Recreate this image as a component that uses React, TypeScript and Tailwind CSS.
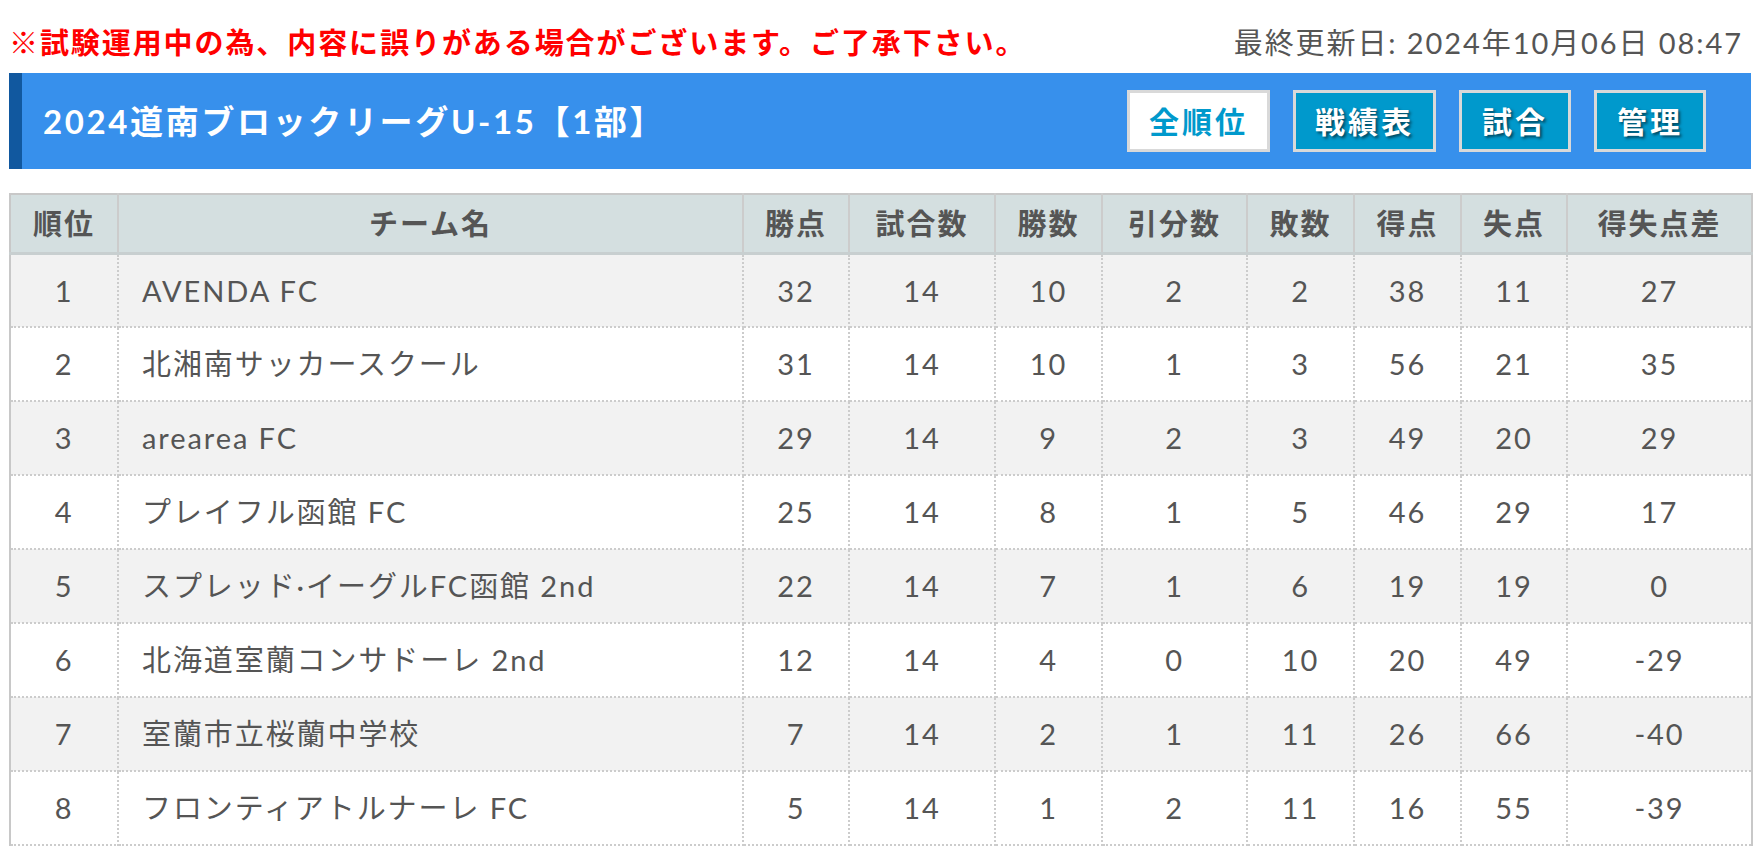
import React from "react";

interface Standing {
  rank: number;
  team: string;
  points: number;
  played: number;
  won: number;
  drawn: number;
  lost: number;
  goalsFor: number;
  goalsAgainst: number;
  diff: number;
}

const standings: Standing[] = [
  { rank: 1, team: "AVENDA FC", points: 32, played: 14, won: 10, drawn: 2, lost: 2, goalsFor: 38, goalsAgainst: 11, diff: 27 },
  { rank: 2, team: "北湘南サッカースクール", points: 31, played: 14, won: 10, drawn: 1, lost: 3, goalsFor: 56, goalsAgainst: 21, diff: 35 },
  { rank: 3, team: "arearea FC", points: 29, played: 14, won: 9, drawn: 2, lost: 3, goalsFor: 49, goalsAgainst: 20, diff: 29 },
  { rank: 4, team: "プレイフル函館 FC", points: 25, played: 14, won: 8, drawn: 1, lost: 5, goalsFor: 46, goalsAgainst: 29, diff: 17 },
  { rank: 5, team: "スプレッド·イーグルFC函館 2nd", points: 22, played: 14, won: 7, drawn: 1, lost: 6, goalsFor: 19, goalsAgainst: 19, diff: 0 },
  { rank: 6, team: "北海道室蘭コンサドーレ 2nd", points: 12, played: 14, won: 4, drawn: 0, lost: 10, goalsFor: 20, goalsAgainst: 49, diff: -29 },
  { rank: 7, team: "室蘭市立桜蘭中学校", points: 7, played: 14, won: 2, drawn: 1, lost: 11, goalsFor: 26, goalsAgainst: 66, diff: -40 },
  { rank: 8, team: "フロンティアトルナーレ FC", points: 5, played: 14, won: 1, drawn: 2, lost: 11, goalsFor: 16, goalsAgainst: 55, diff: -39 },
];

// column header + fixed width (px)
const columns = [
  { label: "順位", width: "w-[108px]" },
  { label: "チーム名", width: "w-[625px]" },
  { label: "勝点", width: "w-[106px]" },
  { label: "試合数", width: "w-[146px]" },
  { label: "勝数", width: "w-[107px]" },
  { label: "引分数", width: "w-[145px]" },
  { label: "敗数", width: "w-[107px]" },
  { label: "得点", width: "w-[107px]" },
  { label: "失点", width: "w-[106px]" },
  { label: "得失点差", width: "w-[185px]" },
];

const navButtons = [
  { label: "全順位", active: true, width: "w-[143px]" },
  { label: "戦績表", active: false, width: "w-[143px]" },
  { label: "試合", active: false, width: "w-[112px]" },
  { label: "管理", active: false, width: "w-[112px]" },
];

export default function App() {
  return (
    <div className="min-h-[867px] bg-white pl-[9px] pr-[11px] font-['Lato','Noto_Sans_CJK_JP',sans-serif] tracking-[0.12em] text-[#555]">
      {/* Notice + last updated */}
      <div className="flex h-[73px] items-center justify-between pt-[12px] pr-[8px] text-[29px] leading-[40px]">
        <p className="font-bold text-[#ff0000]">
          ※試験運用中の為、内容に誤りがある場合がございます。ご了承下さい。
        </p>
        <p className="text-[#555]">最終更新日: 2024年10月06日 08:47</p>
      </div>

      {/* Title bar */}
      <div className="flex h-[96px] items-center justify-between border-l-[13px] border-[#11589f] bg-[#3790ec] pl-[21px] pr-[45px]">
        <h1 className="text-[33px] font-bold leading-none tracking-[0.08em] text-white">
          2024道南ブロックリーグU-15【1部】
        </h1>
        <div className="flex gap-[23px]">
          {navButtons.map((b) => (
            <a
              key={b.label}
              className={`${b.width} flex h-[62px] items-center justify-center border-[3px] border-[#d9d9d9] text-[30px] font-bold tracking-[0.1em] ${
                b.active
                  ? "bg-white text-[#0099cc]"
                  : "bg-[#0099cc] text-white [text-shadow:2px_2px_3px_rgba(0,0,0,0.55)]"
              }`}
            >
              {b.label}
            </a>
          ))}
        </div>
      </div>

      {/* Standings table */}
      <table className="mt-[24px] w-[1742px] table-fixed border-collapse border-x-2 border-t-2 border-solid border-[#c8c8c8] text-[29px]">
        <colgroup>
          {columns.map((c) => (
            <col key={c.label} className={c.width} />
          ))}
        </colgroup>
        <thead>
          <tr className="h-[59px] bg-[#d4dfe0]">
            {columns.map((c, i) => (
              <th
                key={c.label}
                className={`border-b-[3px] border-solid border-b-[#c8cfd0] font-bold text-[#555] ${
                  i < columns.length - 1 ? "border-r-2 border-r-[#cccccc] border-dotted" : ""
                }`}
              >
                {c.label}
              </th>
            ))}
          </tr>
        </thead>
        <tbody>
          {standings.map((s, idx) => {
            const cells = [
              s.points,
              s.played,
              s.won,
              s.drawn,
              s.lost,
              s.goalsFor,
              s.goalsAgainst,
              s.diff,
            ];
            return (
              <tr
                key={s.rank}
                className={`h-[74px] ${idx % 2 === 0 ? "bg-[#f2f2f2]" : "bg-white"}`}
              >
                <td className="border-b-2 border-r-2 border-dotted border-[#cccccc] text-center">
                  {s.rank}
                </td>
                <td className="border-b-2 border-r-2 border-dotted border-[#cccccc] pl-[23px] text-left">
                  {s.team}
                </td>
                {cells.map((v, ci) => (
                  <td
                    key={ci}
                    className={`border-b-2 border-dotted border-[#cccccc] text-center ${
                      ci < cells.length - 1 ? "border-r-2" : ""
                    }`}
                  >
                    {v}
                  </td>
                ))}
              </tr>
            );
          })}
        </tbody>
      </table>
    </div>
  );
}
